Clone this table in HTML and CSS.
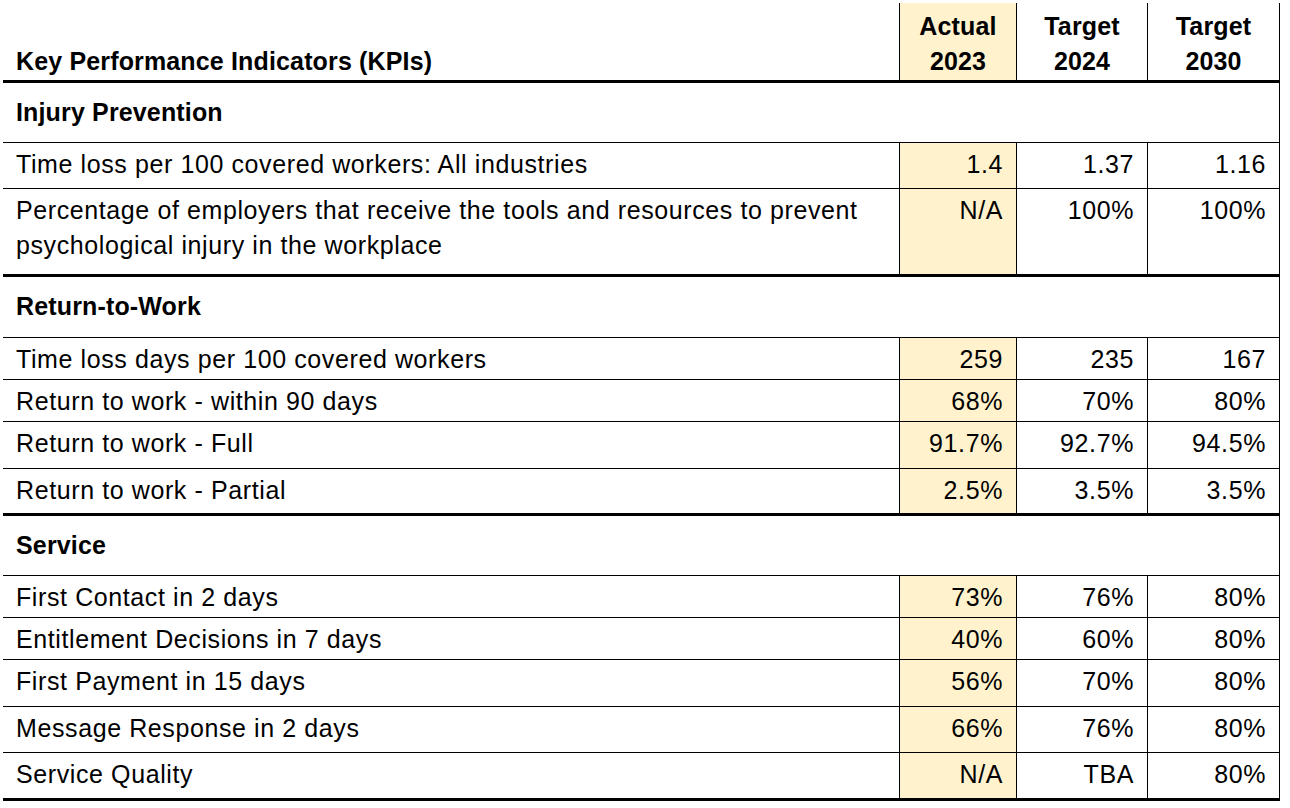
FILE: index.html
```html
<!DOCTYPE html>
<html lang="en">
<head>
<meta charset="utf-8">
<title>Key Performance Indicators</title>
<link rel="stylesheet" href="styles.css">
</head>
<body>
<table class="kpi">
  <colgroup>
    <col class="c-label">
    <col class="c-actual">
    <col class="c-t24">
    <col class="c-t30">
  </colgroup>
  <thead>
    <tr class="head end h80">
      <th class="label">Key Performance Indicators (KPIs)</th>
      <th class="actual">Actual<br>2023</th>
      <th>Target<br>2024</th>
      <th>Target<br>2030</th>
    </tr>
  </thead>
  <tbody>
    <tr class="section h60"><td colspan="4">Injury Prevention</td></tr>
    <tr class="h46"><td class="label">Time loss per 100 covered workers: All industries</td><td class="actual">1.4</td><td>1.37</td><td>1.16</td></tr>
    <tr class="end h88"><td class="label">Percentage of employers that receive the tools and resources to prevent<br>psychological injury in the workplace</td><td class="actual">N/A</td><td>100%</td><td>100%</td></tr>

    <tr class="section h61"><td colspan="4">Return-to-Work</td></tr>
    <tr class="h42"><td class="label">Time loss days per 100 covered workers</td><td class="actual">259</td><td>235</td><td>167</td></tr>
    <tr class="h42"><td class="label">Return to work - within 90 days</td><td class="actual">68%</td><td>70%</td><td>80%</td></tr>
    <tr class="h47"><td class="label">Return to work - Full</td><td class="actual">91.7%</td><td>92.7%</td><td>94.5%</td></tr>
    <tr class="end h47"><td class="label">Return to work - Partial</td><td class="actual">2.5%</td><td>3.5%</td><td>3.5%</td></tr>

    <tr class="section h60"><td colspan="4">Service</td></tr>
    <tr class="h42"><td class="label">First Contact in 2 days</td><td class="actual">73%</td><td>76%</td><td>80%</td></tr>
    <tr class="h42"><td class="label">Entitlement Decisions in 7 days</td><td class="actual">40%</td><td>60%</td><td>80%</td></tr>
    <tr class="h47"><td class="label">First Payment in 15 days</td><td class="actual">56%</td><td>70%</td><td>80%</td></tr>
    <tr class="h46"><td class="label">Message Response in 2 days</td><td class="actual">66%</td><td>76%</td><td>80%</td></tr>
    <tr class="end h48"><td class="label">Service Quality</td><td class="actual">N/A</td><td>TBA</td><td>80%</td></tr>
  </tbody>
</table>
</body>
</html>
```
FILE: styles.css
```css
html, body {
  margin: 0;
  padding: 0;
  background: #ffffff;
}

body {
  padding: 3px 0 0 3px;
  font-family: "Liberation Sans", Arial, sans-serif;
  color: #000;
}

.kpi {
  border-collapse: separate;
  border-spacing: 0;
  table-layout: fixed;
  width: 1277px;
}

.c-label { width: 897px; }
.c-actual { width: 117px; }
.c-t24 { width: 131px; }
.c-t30 { width: 132px; }

.kpi th,
.kpi td {
  box-sizing: border-box;
  padding: 4px 13px 0 13px;
  border-right: 1px solid #000;
  border-bottom: 1px solid #000;
  vertical-align: top;
  text-align: right;
  font-size: 25px;
  line-height: 35px;
  letter-spacing: 0.6px;
  font-weight: normal;
}

.kpi td.label {
  text-align: left;
}

.kpi .actual {
  background: #fff2cc;
}

.kpi tr.end > th,
.kpi tr.end > td {
  border-bottom-width: 3px;
}

/* header */
.kpi .head th {
  font-weight: bold;
  letter-spacing: 0.15px;
  text-align: center;
  vertical-align: bottom;
  line-height: 35px;
  padding: 0 4px 1px 4px;
}

.kpi .head th.label {
  text-align: left;
  padding-left: 13px;
}

/* section rows */
.kpi .section td {
  font-weight: bold;
  letter-spacing: 0.15px;
  text-align: left;
  padding-top: 12px;
}

.h42 { height: 42px; }
.h46 { height: 46px; }
.h47 { height: 47px; }
.h48 { height: 48px; }
.h60 { height: 60px; }
.h61 { height: 61px; }
.h80 { height: 80px; }
.h88 { height: 88px; }
```
